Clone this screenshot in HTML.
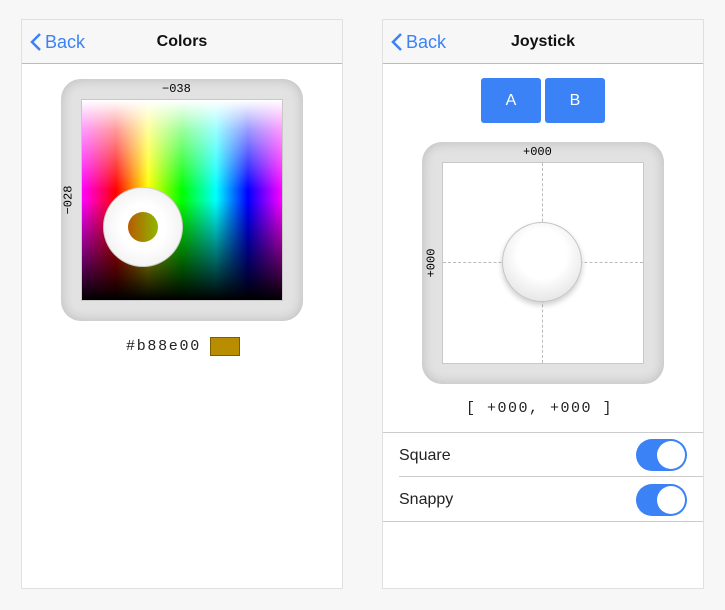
<!DOCTYPE html>
<html><head><style>
body{margin:0;width:725px;height:610px;background:#f7f7f7;font-family:"Liberation Sans",sans-serif;position:relative;overflow:hidden}
.panel{position:absolute;top:19px;width:322px;height:570px;background:#fff;border:1px solid #e0e0e0;box-sizing:border-box}
.hdr{height:43px;background:#f7f7f7;border-bottom:1px solid #bbb;position:relative}
.back{position:absolute;left:8px;top:12px;color:#3b82f6;font-size:18px}
.back svg{vertical-align:-3px;margin-right:3px}
.title{position:absolute;left:0;right:0;top:13px;text-align:center;font-weight:bold;font-size:16px;color:#111}
.frame{position:absolute;width:242px;height:242px;border-radius:20px;background:#e2e2e2;box-shadow:inset 0 0 12px rgba(0,0,0,.18)}
.inner{position:absolute;left:20px;top:20px;width:200px;height:200px;border:1px solid #c8c8c8}
.mono{font-family:"Liberation Mono",monospace;color:#222}
.lab{position:absolute;font-size:12px;font-family:"Liberation Mono",monospace}
.btn{position:absolute;top:58px;width:60px;height:45px;background:#3b82f6;border-radius:3px;color:#fff;font-size:16px;text-align:center;line-height:45px}
.row{position:absolute;left:16px;font-size:16px;color:#222}
.tog{position:absolute;left:253px;width:51px;height:32px;border-radius:16px;background:#3b82f6}
.tog::after{content:"";position:absolute;right:2px;top:2px;width:28px;height:28px;border-radius:50%;background:#fff}
</style></head><body>
<div class="panel" style="left:21px">
 <div class="hdr"><div class="back"><svg width="12" height="18" viewBox="0 0 12 18"><path d="M10 1L2 9l8 8" stroke="#3b82f6" stroke-width="2.5" fill="none"/></svg>Back</div><div class="title">Colors</div></div>
 <div class="frame" style="left:39px;top:59px">
  <div class="lab" style="left:101px;top:3px">−038</div>
  <div class="lab" style="left:-7px;top:114px;transform:rotate(-90deg)">−028</div>
  <div class="inner" style="background:linear-gradient(to bottom,rgba(255,255,255,1) 0%,rgba(255,255,255,0.6) 15%,rgba(255,255,255,0) 45%,rgba(0,0,0,0) 50%,rgba(0,0,0,0.5) 75%,rgba(0,0,0,1) 100%),linear-gradient(to right,#f0f 0%,#f00 17%,#ff0 33%,#0f0 50%,#0ff 67%,#00f 83%,#f0f 100%)">
   <div style="position:absolute;left:21px;top:87px;width:78px;height:78px;border-radius:50%;background:radial-gradient(circle,#fff 40%,#e8e8e8 100%);border:1px solid #ccc">
    <div style="position:absolute;left:24px;top:24px;width:30px;height:30px;border-radius:50%;background:linear-gradient(90deg,#b85a00,#8eb800)"></div>
   </div>
  </div>
 </div>
 <div class="mono" style="position:absolute;left:104px;top:318px;font-size:15px;letter-spacing:1.7px">#b88e00</div>
 <div style="position:absolute;left:188px;top:317px;width:28px;height:17px;background:#b88e00;border:1px solid #7a5e00"></div>
</div>
<div class="panel" style="left:382px">
 <div class="hdr"><div class="back"><svg width="12" height="18" viewBox="0 0 12 18"><path d="M10 1L2 9l8 8" stroke="#3b82f6" stroke-width="2.5" fill="none"/></svg>Back</div><div class="title">Joystick</div></div>
 <div class="btn" style="left:98px">A</div><div class="btn" style="left:162px">B</div>
 <div class="frame" style="left:39px;top:122px">
  <div class="lab" style="left:101px;top:3px">+000</div>
  <div class="lab" style="left:-5px;top:114px;transform:rotate(-90deg)">+000</div>
  <div class="inner" style="background:#fff">
   <div style="position:absolute;left:99px;top:0;height:200px;border-left:1px dashed #bbb"></div>
   <div style="position:absolute;top:99px;left:0;width:200px;border-top:1px dashed #bbb"></div>
   <div style="position:absolute;left:59px;top:59px;width:78px;height:78px;border-radius:50%;background:radial-gradient(circle at 50% 40%,#fff 40%,#d8d8d8 100%);border:1px solid #c4c4c4;box-shadow:0 3px 6px rgba(0,0,0,.2)"></div>
  </div>
 </div>
 <div class="mono" style="position:absolute;left:83px;top:380px;font-size:15px;letter-spacing:1.5px">[ +000, +000 ]</div>
 <div style="position:absolute;left:0;right:0;top:412px;border-top:1px solid #ccc"></div>
 <div class="row" style="top:427px">Square</div><div class="tog" style="top:419px"></div>
 <div style="position:absolute;left:16px;right:0;top:456px;border-top:1px solid #ccc"></div>
 <div class="row" style="top:471px">Snappy</div><div class="tog" style="top:464px"></div>
 <div style="position:absolute;left:0;right:0;top:501px;border-top:1px solid #ccc"></div>
</div>
</body></html>
